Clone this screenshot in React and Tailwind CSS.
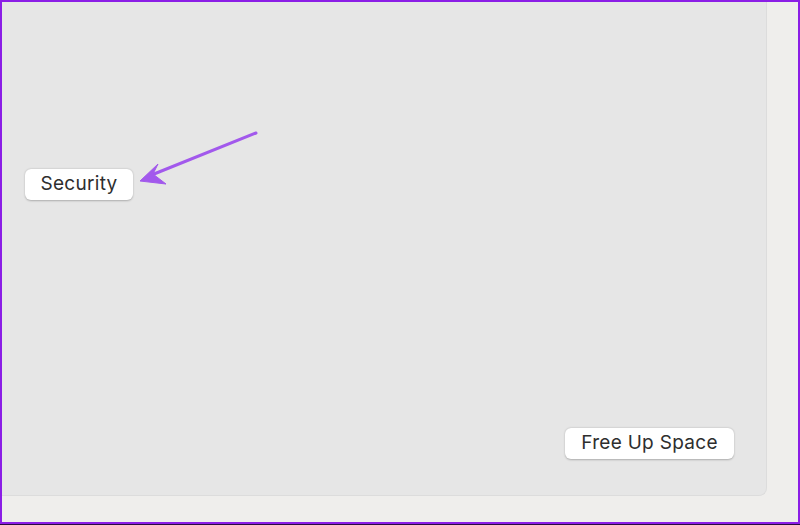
const Arrow = () => (
  <svg
    className="absolute left-0 top-0 pointer-events-none"
    width="800"
    height="525"
    viewBox="0 0 800 525"
  >
    <path d="M256 133 L154 174" stroke="#a259ec" strokeWidth="3" strokeLinecap="round" fill="none" />
    <path d="M140 181 L158 164 L153 174 L166 184 Z" fill="#a259ec" stroke="#a259ec" strokeWidth="1" strokeLinejoin="round" />
  </svg>
);

const MacButton = ({ children, className = '' }) => (
  <button
    className={`h-[31px] rounded-[6px] bg-white text-[19px] tracking-[0.3px] text-[#2e2e2e] shadow-[0_0.5px_2px_rgba(0,0,0,0.25)] ${className}`}
  >
    {children}
  </button>
);

const App = () => {
  return (
    <div className="relative w-[800px] h-[525px] bg-[#2a0b40] font-['Inter',sans-serif]">
      <div className="h-[524px] border-2 border-[#8b1ee6] bg-[#efeeec]">
        <div className="flex flex-col w-[765px] h-[494px] bg-[#e6e6e6] border-r border-b border-[#dcdcdc] rounded-br-[8px] pt-[167px] pl-[23px] pr-[32px] pb-[36px]">
          <MacButton className="w-[108px]">Security</MacButton>
          <MacButton className="w-[169px] self-end mt-auto">Free Up Space</MacButton>
        </div>
      </div>
      <Arrow />
    </div>
  );
};

export default App;
